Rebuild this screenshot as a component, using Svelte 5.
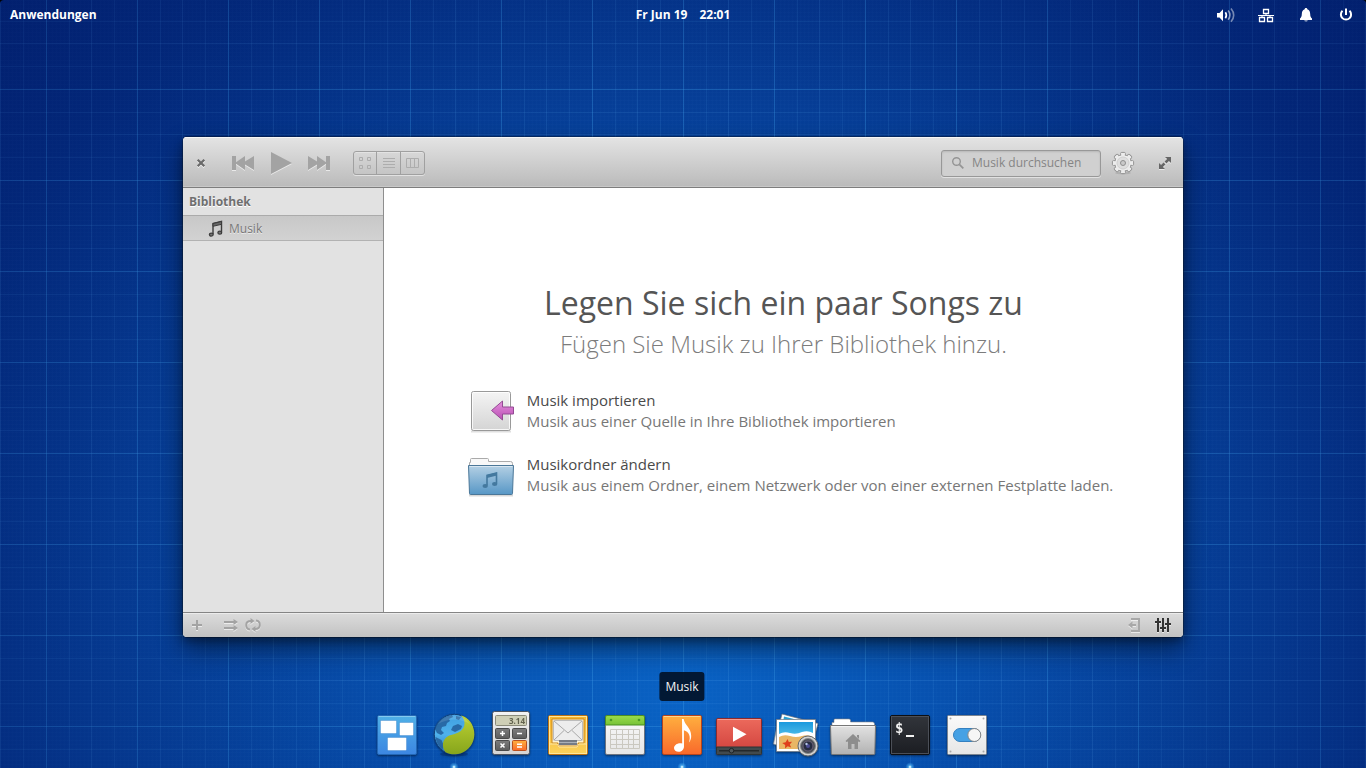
<script>
  let query = $state('');
  let view = $state('grid');
  const views = [
    { id: 'grid', label: 'Rasteransicht' },
    { id: 'list', label: 'Listenansicht' },
    { id: 'columns', label: 'Spaltenansicht' }
  ];
  const apps = [
    { id: 'tasks', label: 'Arbeitsflächen' },
    { id: 'web', label: 'Webbrowser', running: true },
    { id: 'calc', label: 'Taschenrechner' },
    { id: 'mail', label: 'E-Mail' },
    { id: 'calendar', label: 'Kalender' },
    { id: 'music', label: 'Musik', running: true, tip: true },
    { id: 'video', label: 'Videos' },
    { id: 'photos', label: 'Fotos' },
    { id: 'files', label: 'Dateien' },
    { id: 'terminal', label: 'Terminal', running: true },
    { id: 'settings', label: 'Systemeinstellungen' }
  ];
</script>

<svg class="defs" width="0" height="0" aria-hidden="true">
  <defs>
    <linearGradient id="blue" x2="0" y2="1"><stop stop-color="#4fb0e6" /><stop offset="1" stop-color="#3c86e2" /></linearGradient>
    <linearGradient id="globe" x2="0" y2="1"><stop stop-color="#3f9fe0" /><stop offset=".5" stop-color="#4fb2ec" /><stop offset="1" stop-color="#2a74c0" /></linearGradient>
    <linearGradient id="lime" x2="0" y2="1"><stop stop-color="#bdd133" /><stop offset="1" stop-color="#86a51c" /></linearGradient>
    <linearGradient id="silver" x2="0" y2="1"><stop stop-color="#f4f4f4" /><stop offset="1" stop-color="#d4d4d4" /></linearGradient>
    <linearGradient id="paper" x2="0" y2="1"><stop stop-color="#fafafa" /><stop offset="1" stop-color="#e6e6e6" /></linearGradient>
    <linearGradient id="key" x2="0" y2="1"><stop stop-color="#7c7c7c" /><stop offset="1" stop-color="#5c5c5c" /></linearGradient>
    <linearGradient id="gold" x2="0" y2="1"><stop stop-color="#f6b42c" /><stop offset="1" stop-color="#fbd25c" /></linearGradient>
    <linearGradient id="orange" x2="0" y2="1"><stop stop-color="#ffb03f" /><stop offset="1" stop-color="#f9692b" /></linearGradient>
    <linearGradient id="red" x2="0" y2="1"><stop stop-color="#ec6a5c" /><stop offset="1" stop-color="#cf3f3b" /></linearGradient>
    <linearGradient id="green" x2="0" y2="1"><stop stop-color="#9bdc4b" /><stop offset="1" stop-color="#76c236" /></linearGradient>
    <linearGradient id="sky" x2="0" y2="1"><stop stop-color="#1a9ade" /><stop offset="1" stop-color="#7fdcf2" /></linearGradient>
    <linearGradient id="folder" x2="0" y2="1"><stop stop-color="#e2e2e2" /><stop offset="1" stop-color="#b2b2b2" /></linearGradient>
    <linearGradient id="bluefolder" x2="0" y2="1"><stop stop-color="#b4d0e4" /><stop offset="1" stop-color="#5797c6" /></linearGradient>
    <linearGradient id="dark" x2="0" y2="1"><stop stop-color="#32353b" /><stop offset="1" stop-color="#1b1d22" /></linearGradient>
    <linearGradient id="pink" x2="0" y2="1"><stop stop-color="#e58fdc" /><stop offset="1" stop-color="#b94fb4" /></linearGradient>
  </defs>
</svg>

<div class="desktop">
  <header class="panel">
    <button class="panel-text">Anwendungen</button>
    <button class="panel-text clock"><span>Fr Jun 19</span><span>22:01</span></button>
    <div class="indicators">
      <button aria-label="Lautstärke">
        <svg width="20" height="20" viewBox="0 0 20 20" fill="none" stroke="#fff" stroke-width="1.6">
          <path d="M1 8h2.500L7 4.200v12L3.500 12.500H1z" fill="#fff" stroke="none" />
          <path d="M9.400 7.200q2 3 0 6" />
          <path d="M12.200 5.600q3.400 4.600 0 9.200" opacity=".55" />
          <path d="M15 3.600q5.400 6.600 0 13.200" opacity=".45" />
        </svg>
      </button>
      <button aria-label="Netzwerk">
        <svg width="20" height="20" viewBox="0 0 20 20" fill="none" stroke="#fff">
          <path d="M7.500 4.500h5v4h-5zM3.500 12.500h5v4h-5zM11.500 12.500h5v4h-5z" stroke-width="1.300" />
          <path d="M2 10.500h16M10 8.500v2M6 10.500v2M14 10.500v2" />
        </svg>
      </button>
      <button aria-label="Benachrichtigungen">
        <svg width="20" height="20" viewBox="0 0 20 20" fill="#fff">
          <path d="M10 3c-1 0-1.300.6-1.300 1.300C6.500 5 5.900 6.800 5.800 9c-.1 2.500-.6 3.600-1.800 4.600V15h12v-1.400c-1.200-1-1.700-2.100-1.800-4.600-.1-2.200-.7-4-2.900-4.700C11.300 3.600 11 3 10 3zM8.300 15.500h3.400c-.3 1.200-3.100 1.200-3.400 0z" />
        </svg>
      </button>
      <button aria-label="Ausschalten">
        <svg width="20" height="20" viewBox="0 0 20 20" fill="none" stroke="#fff" stroke-width="2">
          <path d="M6.500 5.800a5.100 5.100 0 1 0 7 0M10 3.500v6.500" />
        </svg>
      </button>
    </div>
  </header>

  <main class="window">
    <div class="toolbar">
      <button aria-label="Schließen">
        <svg width="16" height="16" viewBox="0 0 16 16" stroke-width="2.200">
          <path d="M4.700 5.700l6.600 6.600M11.300 5.700l-6.600 6.600" stroke="#f2f2f2" />
          <path d="M4.700 4.700l6.600 6.600M11.300 4.700l-6.600 6.600" stroke="#6a6a6a" />
        </svg>
      </button>
      <div class="transport">
        <button aria-label="Vorheriger Titel">
          <svg class="etched" width="24" height="24" viewBox="0 0 24 24" fill="#a3a3a3">
            <path d="M1 5h4v6.200L14 5v5.500L23 5v14l-9-5.500V19l-9-6.200V19H1z" />
          </svg>
        </button>
        <button aria-label="Wiedergabe">
          <svg class="etched" width="24" height="24" viewBox="0 0 24 24" fill="#a3a3a3"><path d="M2 1l21 11L2 23z" /></svg>
        </button>
        <button aria-label="Nächster Titel">
          <svg class="etched" width="24" height="24" viewBox="0 0 24 24" fill="#a3a3a3">
            <path d="M23 5h-4v6.200L10 5v5.500L1 5v14l9-5.500V19l9-6.200V19h4z" />
          </svg>
        </button>
      </div>
      <div class="views">
        {#each views as v}
          <button aria-label={v.label} aria-pressed={view === v.id} onclick={() => (view = v.id)}>
            <svg width="16" height="16" viewBox="0 0 16 16" fill="none" stroke="#adadad">
              {#if v.id === 'grid'}
                <path d="M2.500 2.500h3v3h-3zM10.500 2.500h3v3h-3zM2.500 10.500h3v3h-3zM10.500 10.500h3v3h-3z" />
              {:else if v.id === 'list'}
                <path d="M2 3.500h12M2 6.500h12M2 9.500h12M2 12.500h12" />
              {:else}
                <path d="M1.500 3.500h12v9h-12zM5.500 3.500v9M9.500 3.500v9" />
              {/if}
            </svg>
          </button>
        {/each}
      </div>
      <label class="search">
        <svg width="14" height="14" viewBox="0 0 14 14" fill="none" stroke="#959595">
          <circle cx="5.500" cy="5.500" r="3.800" stroke-width="1.400" /><path d="M8.300 8.300l4 4" stroke-width="1.800" />
        </svg>
        <input type="text" placeholder="Musik durchsuchen" aria-label="Musik durchsuchen" bind:value={query} />
      </label>
      <button aria-label="Einstellungen">
        <svg width="24" height="24" viewBox="0 0 24 24" fill="none">
          <ellipse cx="12" cy="22" rx="8" ry="1.500" fill="#000" opacity=".1" />
          <g transform="translate(12 12)">
            <g fill="#f0f0f0" stroke="#949494">
              {#each [0, 45, 90, 135, 180, 225, 270, 315] as a}
                <rect x="-2.300" y="-10.600" width="4.600" height="6" rx="1" transform="rotate({a})" />
              {/each}
              <circle r="8.300" />
            </g>
            <g fill="#ececec">
              {#each [0, 45, 90, 135, 180, 225, 270, 315] as a}
                <rect x="-1.800" y="-10" width="3.600" height="6" transform="rotate({a})" />
              {/each}
            </g>
            <circle r="6" fill="#dedede" stroke="#d0d0d0" />
            <circle r="2.500" fill="#c9c9c9" stroke="#8f8f8f" />
          </g>
        </svg>
      </button>
      <button aria-label="Maximieren">
        <svg class="etched" width="16" height="16" viewBox="0 0 16 16" fill="#666">
          <path d="M8 2h6v6l-2.100-2.100-2.500 2.500-1.800-1.800 2.500-2.500zM8 14H2V8l2.100 2.100 2.500-2.500 1.800 1.800-2.500 2.500z" />
        </svg>
      </button>
    </div>

    <div class="body">
      <nav class="sidebar">
        <h2>Bibliothek</h2>
        <button class="entry">
          <svg width="16" height="18" viewBox="0 0 16 18" fill="none" stroke="#3c3c3c">
            <path d="M5 14V3.500L13.500 1.500V12" stroke-width="1.400" />
            <path d="M5 3.500l8.500-2v2.800L5 6.300z" fill="#666" stroke-width="1" />
            <ellipse cx="3.300" cy="14.600" rx="1.900" ry="1.500" fill="#777" stroke-width="1.300" />
            <ellipse cx="11.800" cy="12.700" rx="1.900" ry="1.500" fill="#777" stroke-width="1.300" />
          </svg>
          <span>Musik</span>
        </button>
      </nav>

      <section class="welcome">
        <h1>Legen Sie sich ein paar Songs zu</h1>
        <p class="subtitle">Fügen Sie Musik zu Ihrer Bibliothek hinzu.</p>
        <div class="choices">
          <button class="choice">
            <svg width="48" height="48" viewBox="0 0 48 48">
              <path d="M4 44.500h40" stroke="#000" stroke-width="2" opacity=".12" />
              <rect x="4.500" y="4.500" width="39" height="39" rx="2" fill="url(#silver)" stroke="#999" />
              <rect x="5.500" y="5.500" width="37" height="37" rx="1" fill="none" stroke="#fff" opacity=".8" />
              <path d="M24.500 23.500l11-9.500v6h11v7h-11v6z" fill="url(#pink)" stroke="#944a94" />
            </svg>
            <span class="choice-text"><strong>Musik importieren</strong><span>Musik aus einer Quelle in Ihre Bibliothek importieren</span></span>
          </button>
          <button class="choice">
            <svg width="48" height="48" viewBox="0 0 48 48">
              <path d="M2 44.500h44" stroke="#000" stroke-width="2" opacity=".15" />
              <path d="M2.500 16v-4.500h1v-3q0-1 1-1h16q1 0 1 1v2h22q2 0 2 2V16z" fill="#f8f8f8" stroke="#aaa" />
              <path d="M1.500 14.500h45l-1 28q0 1-1 1h-41q-1 0-1-1z" fill="url(#bluefolder)" stroke="#4b7798" />
              <path d="M2.500 15.500h43" stroke="#fff" opacity=".5" />
              <path d="M20 34.500V24.300L29.500 22v10.500" fill="none" stroke="#44799f" stroke-width="1.600" />
              <path d="M20 24l10-2.400v3L20 27z" fill="#44799f" />
              <ellipse cx="18.200" cy="35" rx="2.700" ry="2" fill="#44799f" /><ellipse cx="27.700" cy="33" rx="2.700" ry="2" fill="#44799f" />
            </svg>
            <span class="choice-text"><strong>Musikordner ändern</strong><span>Musik aus einem Ordner, einem Netzwerk oder von einer externen Festplatte laden.</span></span>
          </button>
        </div>
      </section>
    </div>

    <footer class="statusbar">
      <button aria-label="Wiedergabeliste hinzufügen">
        <svg class="etched" width="16" height="16" viewBox="0 0 16 16" stroke="#a3a3a3" stroke-width="2"><path d="M3 8h10M8 3v10" /></svg>
      </button>
      <div class="modes">
        <button aria-label="Zufallswiedergabe">
          <svg class="etched" width="16" height="16" viewBox="0 0 16 16" fill="#a3a3a3">
            <path d="M1 4h9.500V2l4.500 3-4.500 3V6H1zM1 10h9.500V8l4.500 3-4.500 3v-2H1z" />
          </svg>
        </button>
        <button aria-label="Wiederholen">
          <svg class="etched" width="16" height="16" viewBox="0 0 16 16" fill="none" stroke="#a3a3a3" stroke-width="2">
            <path d="M5 12.500Q1.200 12 1.200 8T6 4M11 3.500Q14.800 4 14.800 8T10 12" />
            <path d="M5.500 1l4 3-4 3zM10.500 15l-4-3 4-3z" fill="#a3a3a3" stroke="none" />
          </svg>
        </button>
      </div>
      <button class="push" aria-label="Seitenleiste einblenden">
        <svg class="etched" width="16" height="16" viewBox="0 0 16 16" fill="#a8a8a8">
          <path d="M5 1h9v14H5v-2h7V3H5zM2 8l4.500-3.500V7H10v2H6.500v2.500z" />
        </svg>
      </button>
      <button aria-label="Equalizer">
        <svg class="etched" width="16" height="16" viewBox="0 0 16 16" fill="#333">
          <path d="M2 1h2v14H2zM7 1h2v14H7zM12 1h2v14h-2zM0 4h6v2H0zM5 10h6v2H5zM10 6h6v2h-6z" />
        </svg>
      </button>
    </footer>
  </main>

  <nav class="dock" aria-label="Dock">
    {#each apps as app}
      <button class="app" class:running={app.running} aria-label={app.label}>
        {#if app.tip}<span class="tip">{app.label}</span>{/if}
        <svg width="48" height="48" viewBox="0 0 48 48">
          {#if app.id === 'tasks'}
            <rect x="4.500" y="4.500" width="39" height="39" rx="1.500" fill="url(#blue)" stroke="#2367b5" />
            <path d="M5.500 5.500h37" stroke="#9bd6f5" opacity=".7" />
            <g fill="#fff" stroke="#2f79c4" stroke-opacity=".35">
              <rect x="7.500" y="9.500" width="16" height="13" rx="1" /><rect x="26.500" y="11.500" width="14" height="13" rx="1" /><rect x="14.500" y="26.500" width="19" height="13" rx="1" />
            </g>
          {:else if app.id === 'web'}
            <ellipse cx="24" cy="43" rx="14" ry="2.500" fill="#001c4d" opacity=".3" />
            <circle cx="24.300" cy="23.300" r="20" fill="url(#globe)" stroke="#123f78" />
            <path d="M9 10q6-5 13-6l1 2-4 2 1 2-3 2-1 3-4 1-1 3 3 3-3 2-4-2-2-4q1-5 4-8zM26 5l5 1-2 3-3-1zM23 15l5-2 4 2-1 3-6 3-4-2zM5.500 26l6 3 2 5-1 5q-6-5-7-13z" fill="#205a96" opacity=".8" />
            <path d="M34 5.500C41 9 44.300 16 44.300 23.300A20 20 0 0 1 15.500 41.300C10.500 34.500 13 26 21 24C29 22 34.500 19 34.500 12Q34.500 8 31 4.500z" fill="url(#lime)" />
            <path d="M8 13a19 19 0 0 1 32 0Q24 4 8 13z" fill="#fff" opacity=".12" />
          {:else if app.id === 'calc'}
            <rect x="5.500" y=".5" width="37" height="43" rx="2" fill="url(#silver)" stroke="#4d5564" />
            <rect x="8.500" y="4.500" width="31" height="10" rx="1" fill="#cfcfb6" stroke="#8b8b7a" />
            <text class="display" x="38" y="12.500" text-anchor="end">3.14</text>
            <rect x="8.500" y="17.500" width="14" height="10" rx="1" fill="url(#key)" stroke="#4a4a4a" />
            <rect x="25.500" y="17.500" width="14" height="10" rx="1" fill="url(#key)" stroke="#4a4a4a" />
            <rect x="8.500" y="29.500" width="14" height="10" rx="1" fill="url(#key)" stroke="#4a4a4a" />
            <rect x="25.500" y="29.500" width="14" height="10" rx="1" fill="url(#orange)" stroke="#b94f1f" />
            <path d="M13 22.500h5M15.500 20v5M30 22.500h5M13.500 32.500l4 4M17.500 32.500l-4 4M30 33.300h5M30 36h5" stroke="#fff" stroke-width="1.500" />
          {:else if app.id === 'mail'}
            <rect x="4.500" y="4.500" width="39" height="39" rx="1.500" fill="url(#gold)" stroke="#bd7413" />
            <rect x="5.500" y="5.500" width="37" height="37" fill="none" stroke="#ffe69a" />
            <path d="M8 8h32v24h-6v3H14v-3H8z" fill="#fff3d0" stroke="#c8861c" />
            <rect x="9.500" y="9.500" width="29" height="20" rx="1" fill="#ededed" stroke="#bcbcbc" />
            <path d="M10 29l10-9.500M38 29l-10-9.500M10 10l14 12L38 10" fill="none" stroke="#a9a9a9" />
            <path d="M15 29h18v5H15z" fill="#757b85" /><path d="M15 31.500h18" stroke="#aab0b8" />
            <path d="M5 33h8l2 3h18l2-3h8" fill="none" stroke="#ffe8a6" />
          {:else if app.id === 'calendar'}
            <rect x="4.500" y="4.500" width="39" height="39" rx="1.500" fill="url(#paper)" stroke="#6d7480" />
            <path d="M4.500 14V6q0-1.500 1.500-1.500h36q1.500 0 1.500 1.500v8z" fill="url(#green)" stroke="#4c8f23" />
            <circle cx="10" cy="9" r="1.300" fill="#4b9a24" /><circle cx="38" cy="9" r="1.300" fill="#4b9a24" />
            <path d="M9.500 18.500h29v19h-29zM9.500 23.500h29M9.500 28.500h29M9.500 33.500h29M15.500 18.500v19M21.500 18.500v19M27.500 18.500v19M32.500 18.500v19" fill="none" stroke="#cac8c0" />
          {:else if app.id === 'music'}
            <rect x="4.500" y="4.500" width="39" height="39" rx="1.500" fill="url(#orange)" stroke="#b8441c" />
            <path d="M5.500 5.500h37" stroke="#ffd58a" />
            <path d="M24 8h1.700c.6 6 7.500 8.500 7.500 17 0 2.600-.8 4.900-2.200 6.500 1.900-6 .3-10.500-5.100-12.300L26 35.500c0 3-2.400 5.300-5.500 5.300-2.500 0-4.500-1.400-4.500-3.700 0-3.200 4-5.800 8.200-4.600z" fill="#fff" />
          {:else if app.id === 'video'}
            <rect x="1.500" y="7.500" width="45" height="36" rx="1.500" fill="url(#red)" stroke="#8f2a2c" />
            <path d="M2.500 8.500h43" stroke="#f59b90" />
            <path d="M1.500 36h45v6.500q0 1-1 1h-43q-1 0-1-1z" fill="#424a4d" stroke="#2c3335" />
            <path d="M4 39.700h40" stroke="#24292b" stroke-width="1.500" /><circle cx="16.500" cy="39.700" r="2.300" fill="#50585b" stroke="#202426" />
            <path d="M18 15.700l13.500 7.500L18 30.700z" fill="#fff" />
          {:else if app.id === 'photos'}
            <path d="M10 3l36 9.500-7 26L3 30z" fill="#fff" stroke="#6d7680" stroke-width=".7" /><path d="M12 5.500l31.500 8-2 8-31-8z" fill="#2a9fd2" />
            <path d="M5 15l-3.500 18 6 2z" fill="#eee" stroke="#7b848c" stroke-width=".7" />
            <rect x="4.500" y="8.500" width="39" height="32" fill="#fff" stroke="#6d7680" stroke-width=".7" />
            <rect x="7" y="11" width="34" height="27" fill="url(#sky)" />
            <path d="M7 23q5-3 11-1t12-1q6-2 11 1v16H7z" fill="#fff" /><path d="M7 26q5-3 11-1t12 0q6-2 11 1v12H7z" fill="#e9b665" />
            <path d="M15.500 28l1.300 3 3.300-.2-2.300 2.600 1.400 3.200-3.500-1.400-2.700 2.200.2-3.500-3-1.800 3.500-.8z" fill="#df3f1c" />
            <circle cx="36" cy="35" r="10" fill="#d2d2d0" stroke="#62676d" /><circle cx="36" cy="35" r="7.500" fill="#4c5058" stroke="#888" />
            <circle cx="36" cy="35" r="5" fill="#262c40" stroke="#6b6078" /><circle cx="36" cy="35" r="2" fill="#4b4c94" /><circle cx="34.500" cy="33" r="1.200" fill="#b7c7e6" />
          {:else if app.id === 'files'}
            <path d="M3 18v-6.500h2V9q0-1 1-1h14q1 0 1.500 1v2h22q2 0 2 2v5z" fill="#fff" stroke="#8a8f96" stroke-width=".6" />
            <path d="M1.500 14.500h45l-.7 28q0 1-1 1H3.300q-1 0-1-1z" fill="url(#folder)" stroke="#777" />
            <path d="M2.500 15.500h43" stroke="#f2f2f2" />
            <path d="M24 23l7.500 7-1 1-1.500-.5V38h-3.500v-5h-3v5H19v-7.500l-1.500.5-1-1zM28 24h2v4l-2-2z" fill="#8d8d8d" />
          {:else if app.id === 'terminal'}
            <rect x="4.500" y="4.500" width="39" height="39" rx="1.500" fill="url(#dark)" stroke="#0d0f13" />
            <rect x="5.500" y="5.500" width="37" height="37" fill="none" stroke="#4b4f57" />
            <text class="prompt" x="9" y="22">$</text><path d="M20 25h8" stroke="#f2f2f2" stroke-width="2" />
          {:else}
            <rect x="4.500" y="4.500" width="39" height="39" rx="1" fill="url(#paper)" stroke="#7c8591" />
            <g fill="#a9a9a9"><circle cx="7.500" cy="7.500" r="1" /><circle cx="40.500" cy="7.500" r="1" /><circle cx="7.500" cy="40.500" r="1" /><circle cx="40.500" cy="40.500" r="1" /></g>
            <rect x="10.500" y="17.500" width="27" height="13" rx="6.500" fill="#46a1e4" stroke="#3380c0" />
            <circle cx="31.300" cy="24" r="6.500" fill="#f6f6f6" stroke="#858585" />
          {/if}
        </svg>
      </button>
    {/each}
  </nav>
</div>

<style>
  :global(body) { background: #000; }
  .defs { position: absolute; }
  button, input { font: inherit; color: inherit; background: none; border: 0; padding: 0; margin: 0; }
  button { display: flex; align-items: center; justify-content: center; cursor: default; }
  svg { display: block; flex: none; }
  h1, h2, p { margin: 0; font-weight: 400; }

  .desktop {
    min-height: 100vh;
    box-sizing: border-box;
    display: flex;
    flex-direction: column;
    border-radius: 4px 4px 0 0;
    overflow: hidden;
    font: 12px/18px "Open Sans", "Noto Sans", sans-serif;
    background:
      radial-gradient(ellipse 62% 95% at 50% 60%, transparent 45%, rgba(1, 24, 100, .5) 115%),
      linear-gradient(90deg, rgba(60, 155, 230, .36) 1px, transparent 1px) 46px 0 / 91px 91px,
      linear-gradient(rgba(60, 155, 230, .36) 1px, transparent 1px) 0 89px / 91px 91px,
      linear-gradient(90deg, transparent 23px, rgba(90, 170, 240, .11) 23px 24px, transparent 24px 45px, rgba(90, 170, 240, .15) 45px 46px, transparent 46px 68px, rgba(90, 170, 240, .11) 68px 69px, transparent 69px) 46px 0 / 91px 91px,
      linear-gradient(transparent 23px, rgba(90, 170, 240, .11) 23px 24px, transparent 24px 45px, rgba(90, 170, 240, .15) 45px 46px, transparent 46px 68px, rgba(90, 170, 240, .11) 68px 69px, transparent 69px) 0 89px / 91px 91px,
      repeating-linear-gradient(90deg, rgba(120, 190, 255, .02) 0 1px, transparent 1px 4px),
      repeating-linear-gradient(rgba(120, 190, 255, .02) 0 1px, transparent 1px 4px),
      radial-gradient(ellipse 66% 120% at 50% 92%, #0962c4 0%, #0750ae 30%, #063f98 66%, #032c80 92%, #02206f 120%);
  }

  .panel {
    display: grid;
    grid-template-columns: 1fr auto 1fr;
    align-items: center;
    height: 30px;
    padding: 0 10px;
    color: #fff;
    font-weight: 700;
    text-shadow: 0 0 2px rgba(0, 0, 0, .6), 0 1px 2px rgba(0, 0, 0, .5);
  }
  .panel-text { justify-self: start; }
  .clock { gap: 12px; }
  .indicators { display: flex; justify-content: flex-end; gap: 20px; }

  .window {
    width: min(1000px, calc(100% - 32px));
    min-height: 500px;
    margin: 107px auto 34px;
    display: flex;
    flex-direction: column;
    border-radius: 4px;
    overflow: hidden;
    background: #fff;
    color: #777;
    box-shadow: 0 0 0 1px rgba(0, 0, 0, .3), 0 4px 8px rgba(0, 0, 0, .3), 0 12px 26px rgba(0, 0, 0, .45);
  }
  .etched { filter: drop-shadow(0 1px 0 rgba(255, 255, 255, .6)); }

  .toolbar {
    display: flex;
    align-items: center;
    box-sizing: border-box;
    height: 51px;
    padding: 2px 10px 0;
    border-bottom: 1px solid #7d7d7d;
    background: linear-gradient(#e4e4e4, #bababa);
    box-shadow: inset 0 1px #f6f6f6, inset 0 -1px #c8c8c8;
  }
  .transport { display: flex; gap: 14px; margin: 0 22px; }
  .views {
    display: flex;
    box-sizing: border-box;
    height: 24px;
    border: 1px solid #a0a0a0;
    border-radius: 3px;
    box-shadow: 0 1px rgba(255, 255, 255, .5), inset 0 1px rgba(255, 255, 255, .3);
  }
  .views button { width: 24px; border-left: 1px solid #a0a0a0; }
  .views button:first-child { width: 22px; border-left: 0; }
  .search {
    display: flex;
    align-items: center;
    gap: 7px;
    box-sizing: border-box;
    width: 160px;
    height: 27px;
    margin: 0 10px 0 auto;
    padding-left: 9px;
    border: 1px solid #989898;
    border-radius: 3px;
    background: #d0d0d0;
    box-shadow: 0 1px rgba(255, 255, 255, .5), inset 0 1px 2px rgba(0, 0, 0, .12);
  }
  .search input { flex: 1; min-width: 0; outline: 0; }
  .search input::placeholder { color: #858585; opacity: 1; }
  .toolbar > button:last-child { margin-left: 22px; }

  .body { flex: 1; display: flex; }
  .sidebar { width: 200px; flex: none; border-right: 1px solid #8e8e8e; background: #e2e2e2; }
  .sidebar h2 { padding: 0 6px; font-size: 12px; line-height: 27px; font-weight: 700; color: #6f6f6f; text-shadow: 0 1px #fff; }
  .entry {
    width: 100%;
    height: 26px;
    justify-content: flex-start;
    gap: 5px;
    padding: 2px 0 0 25px;
    border-top: 1px solid #ababab;
    border-bottom: 1px solid #b2b2b2;
    background: linear-gradient(#c8c8c8, #d2d2d2);
    text-shadow: 0 1px rgba(255, 255, 255, .6);
  }

  .welcome {
    flex: 1;
    display: flex;
    flex-direction: column;
    align-items: center;
    justify-content: center;
    padding-bottom: 22px;
  }
  h1 { color: #555; font-size: 32px; line-height: 46px; }
  .subtitle { color: #7c7c7c; font-size: 24px; line-height: 36px; font-weight: 300; }
  .choices { display: flex; flex-direction: column; gap: 16px; margin-top: 25px; padding-left: 13px; }
  .choice { justify-content: flex-start; gap: 12px; text-align: left; font-size: 15px; line-height: 21px; }
  .choice-text { display: flex; flex-direction: column; }
  .choice strong { font-weight: 400; color: #4a4a4a; }

  .statusbar {
    display: flex;
    align-items: center;
    height: 24px;
    padding: 0 12px 0 6px;
    border-top: 1px solid #858585;
    background: linear-gradient(#dcdcdc, #c2c2c2);
    box-shadow: inset 0 1px #ececec;
  }
  .modes { display: flex; gap: 6px; margin-left: 18px; }
  .push { margin: 0 13px 0 auto; }

  .dock { display: flex; justify-content: center; gap: 9px; margin-top: auto; padding: 0 2px 9px 0; }
  .app { position: relative; }
  .app svg { filter: drop-shadow(0 1px 1px rgba(0, 0, 0, .45)); }
  .running::after {
    content: "";
    position: absolute;
    left: 50%;
    bottom: -13px;
    width: 10px;
    height: 10px;
    margin-left: -5px;
    background: radial-gradient(circle, #c8eeff 8%, rgba(90, 195, 255, .6) 26%, transparent 66%);
  }
  .tip {
    position: absolute;
    bottom: 58px;
    left: 50%;
    transform: translateX(-50%);
    padding: 6px 6px 5px;
    border-radius: 3px;
    background: rgba(2, 18, 40, .92);
    color: #f4f4f4;
  }
  .display { font: 700 8px "Open Sans", sans-serif; fill: #63634f; }
  .prompt { font: 700 14px "DejaVu Sans Mono", monospace; fill: #f2f2f2; }
</style>
